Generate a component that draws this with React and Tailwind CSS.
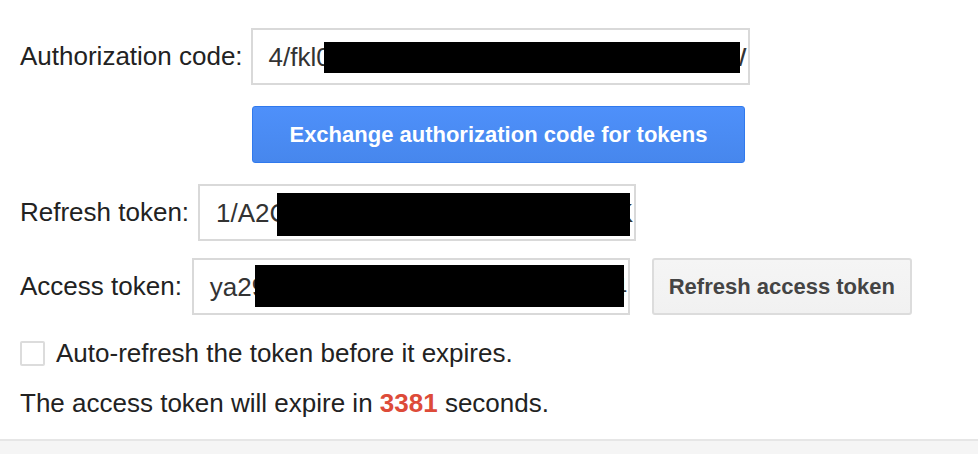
import React from "react";

const labelCls = "text-[26px] leading-[30px] text-[#222] whitespace-nowrap pb-[2px]";
const fieldCls = "relative h-[57px] border-2 border-[#d9d9d9] bg-white pl-4 pr-[1px] flex items-center overflow-hidden text-[26px] leading-[30px] text-[#333] whitespace-nowrap";

// redacted token field: visible start, visible tail, black box on top
function Field({ width, head, tail, box }) {
  return (
    <div className={fieldCls} style={{ width }}>
      <span>{head}</span>
      <span className="ml-auto">{tail}</span>
      <div className="absolute bg-black" style={box} />
    </div>
  );
}

export default function App() {
  return (
    <div className="min-h-[454px] bg-white flex flex-col font-['Liberation_Sans',Arial,sans-serif]">
      <div className="pl-[20px] pt-[28px]">

        {/* Authorization code */}
        <div className="flex items-center gap-[8px]">
          <label className={labelCls}>Authorization code:</label>
          <Field width={499} head="4/fkl0" tail="W"
            box={{ left: 71, top: 12, width: 416, height: 31 }} />
        </div>

        {/* Exchange */}
        <button className="mt-[21px] ml-[232px] w-[493px] h-[57px] rounded-[3px] border border-[#3079ed] bg-gradient-to-b from-[#4e90fa] to-[#4787ed] text-white text-[22px] font-bold">
          Exchange authorization code for tokens
        </button>

        {/* Refresh token */}
        <div className="mt-[21px] flex items-center gap-[9px]">
          <label className={labelCls}>Refresh token:</label>
          <Field width={438} head="1/A2C" tail="K"
            box={{ left: 77, top: 7, width: 353, height: 43 }} />
        </div>

        {/* Access token */}
        <div className="mt-[17px] flex items-center">
          <label className={labelCls + " mr-[10px]"}>Access token:</label>
          <Field width={438} head="ya29" tail="4"
            box={{ left: 61, top: 5, width: 369, height: 42 }} />
          <button className="ml-[22px] w-[260px] h-[57px] rounded-[3px] border-2 border-[#dcdcdc] bg-gradient-to-b from-[#f5f5f5] to-[#f1f1f1] text-[#444] text-[22px] font-bold">
            Refresh access token
          </button>
        </div>

        {/* Auto refresh */}
        <label className="mt-[23px] flex items-center gap-[11px] h-[30px]">
          <span className="w-[25px] h-[25px] border-2 border-[#dcdcdc] rounded-[2px] bg-white" />
          <span className="text-[26px] leading-[30px] text-[#222]">Auto-refresh the token before it expires.</span>
        </label>

        <p className="mt-[20px] text-[26px] leading-[30px] text-[#222]">
          The access token will expire in <span className="font-bold text-[#dd4b39]">3381</span> seconds.
        </p>
      </div>

      <div className="mt-[21px] flex-1 border-t-2 border-[#e6e6e6] bg-[#f5f5f5]" />
    </div>
  );
}
